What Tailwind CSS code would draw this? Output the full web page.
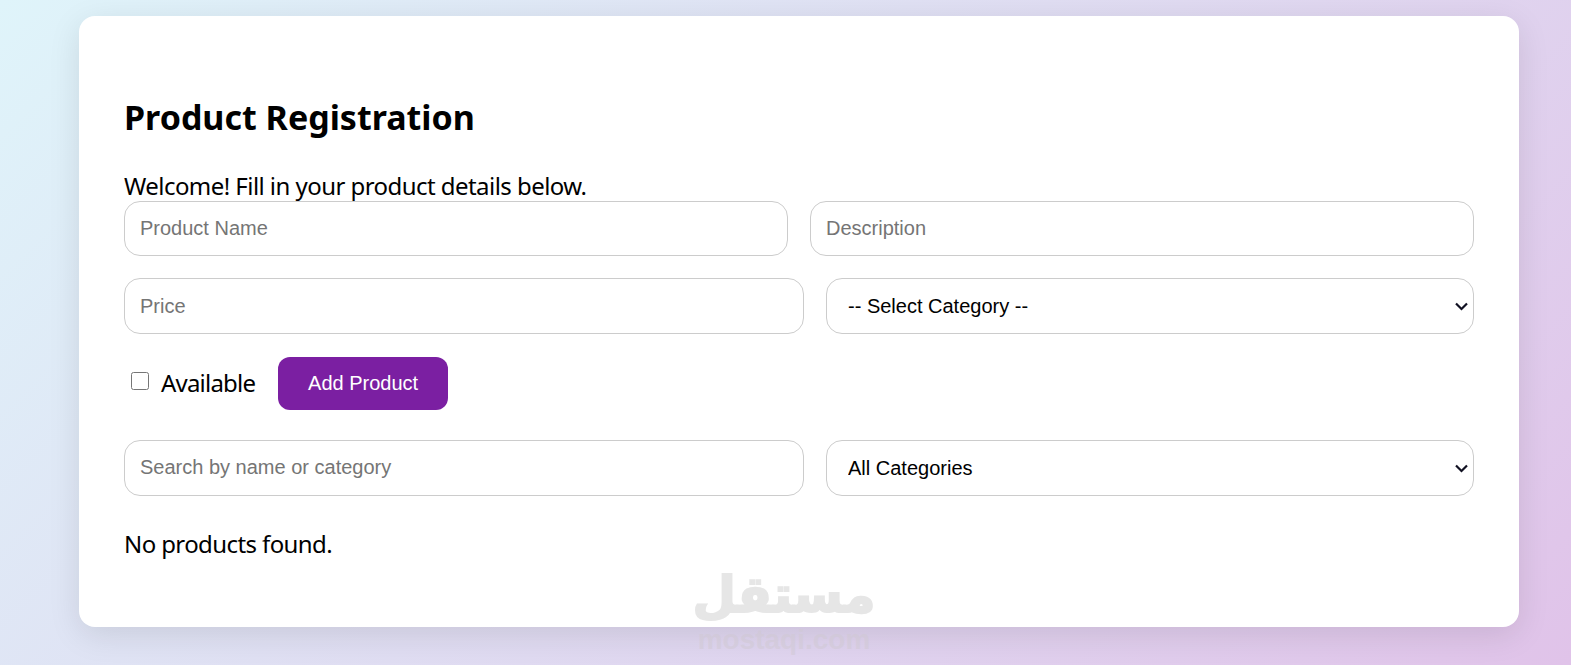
<!DOCTYPE html>
<html>
<head>
<meta charset="utf-8">
<script src="https://cdn.jsdelivr.net/npm/@tailwindcss/browser@4"></script>
</head>
<body class="h-[665px] overflow-hidden bg-[linear-gradient(135deg,#dff4fa,#e0c3e9)] font-['Noto_Sans',sans-serif] text-black">
<div class="relative h-[665px] pt-4 pl-[79px]">
  <main class="w-[1440px] h-[611px] rounded-2xl bg-white shadow-[0_8px_32px_rgba(0,0,0,0.1)] px-[45px] pt-[79px]">
    <h1 class="text-[34px] leading-[44px] font-bold">Product Registration</h1>
    <p class="mt-[32px] text-[24px] leading-[30px] tracking-[-0.55px]">Welcome! Fill in your product details below.</p>
    <div class="flex gap-[22px]">
      <input class="relative flex-1 min-w-0 h-[55px] px-[15px] border border-[#ccc] rounded-2xl bg-white font-['Liberation_Sans',sans-serif] text-[20px] placeholder:text-[#757575]" placeholder="Product Name">
      <input class="relative flex-1 min-w-0 h-[55px] px-[15px] border border-[#ccc] rounded-2xl bg-white font-['Liberation_Sans',sans-serif] text-[20px] placeholder:text-[#757575]" placeholder="Description">
    </div>
    <div class="flex gap-[22px] mt-[22px]">
      <input class="w-[680px] h-[56px] px-[15px] border border-[#ccc] rounded-2xl bg-white font-['Liberation_Sans',sans-serif] text-[20px] placeholder:text-[#757575]" placeholder="Price">
      <div class="relative flex-1 min-w-0">
        <select class="w-full appearance-none h-[56px] pl-[21px] pr-8 border border-[#ccc] rounded-2xl bg-white font-['Liberation_Sans',sans-serif] text-[20px]"><option>-- Select Category --</option></select>
        <svg class="absolute right-[6px] top-[24px] w-[13px] h-[9px] pointer-events-none" viewBox="0 0 13 9" fill="none" stroke="#111122" stroke-width="2.2"><path d="M1 1.5l5.5 5.5L12 1.5"/></svg>
      </div>
    </div>
    <div class="flex items-center mt-[23px] h-[53px]">
      <input type="checkbox" class="w-[18px] h-[18px] ml-[7px] mr-3 -mt-[6px]">
      <label class="text-[24px] leading-[30px] -mt-px tracking-[-0.8px]">Available</label>
      <button class="ml-[23px] w-[170px] h-[53px] pb-[2px] rounded-xl bg-[#7b1fa2] text-white font-['Liberation_Sans',sans-serif] text-[20px]">Add Product</button>
    </div>
    <div class="flex gap-[22px] mt-[30px]">
      <input class="w-[680px] h-[56px] px-[15px] pb-[2px] border border-[#ccc] rounded-2xl bg-white font-['Liberation_Sans',sans-serif] text-[20px] placeholder:text-[#757575]" placeholder="Search by name or category">
      <div class="relative flex-1 min-w-0">
        <select class="w-full appearance-none h-[56px] pl-[21px] pr-8 border border-[#ccc] rounded-2xl bg-white font-['Liberation_Sans',sans-serif] text-[20px]"><option>All Categories</option></select>
        <svg class="absolute right-[6px] top-[24px] w-[13px] h-[9px] pointer-events-none" viewBox="0 0 13 9" fill="none" stroke="#111122" stroke-width="2.2"><path d="M1 1.5l5.5 5.5L12 1.5"/></svg>
      </div>
    </div>
    <p class="mt-[33px] text-[24px] leading-[30px] tracking-[-0.6px]">No products found.</p>
  </main>
  <div class="absolute left-[696px] top-[562px] w-[176px] flex flex-col items-center pointer-events-none">
    <span class="font-['DejaVu_Sans',sans-serif] font-bold text-[50px] leading-[66px] text-[#e6e6e6] [-webkit-text-stroke:2px_#e6e6e6]" dir="rtl" lang="ar">مستقل</span>
    <span class="-mt-[3px] font-['Liberation_Sans',sans-serif] font-bold text-[28px] leading-[30px] text-[#cfc8d2]/50">mostaqi.com</span>
  </div>
</div>
</body>
</html>
